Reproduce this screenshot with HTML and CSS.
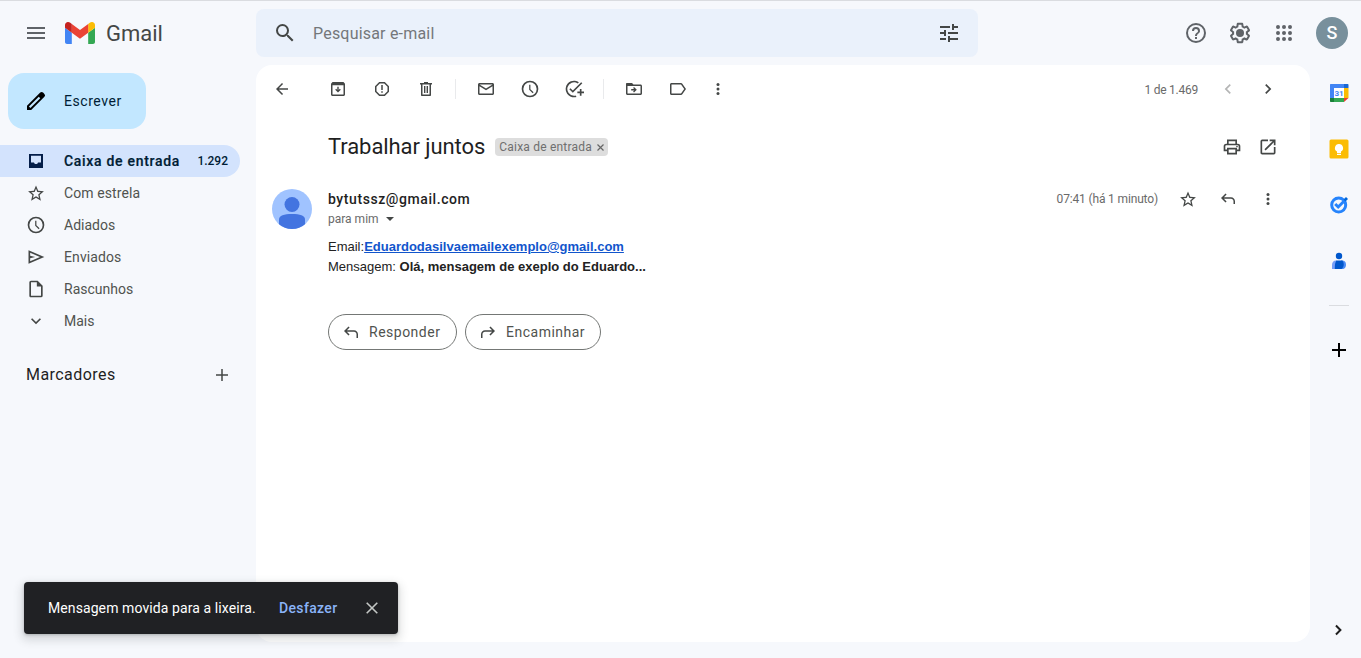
FILE: index.html
```html
<!DOCTYPE html>
<html lang="pt-BR">
<head>
<meta charset="utf-8">
<title>Gmail</title>
<link rel="stylesheet" href="styles.css">
</head>
<body>
<div class="app">
  <header class="header">
    <div class="brand">
      <svg class="menu" width="18" height="12" viewBox="0 0 18 12"><path d="M0 0h18v2H0zM0 5h18v2H0zM0 10h18v2H0z"/></svg>
      <svg class="logo" width="30" height="22" viewBox="52 42 88 66" preserveAspectRatio="none"><path fill="#4285f4" d="M58 108h14V74L52 59v43c0 3.320 2.690 6 6 6"/><path fill="#34a853" d="M120 108h14c3.320 0 6-2.690 6-6V59l-20 15"/><path fill="#fbbc04" d="M120 48v26l20-15v-8c0-7.420-8.470-11.650-14.400-7.200"/><path fill="#ea4335" d="M72 74V48l24 18 24-18v26L96 92"/><path fill="#c5221f" d="M52 51v8l20 15V48l-5.600-4.200c-5.940-4.450-14.400-.22-14.400 7.200"/></svg>
      <span class="brand-name">Gmail</span>
    </div>
    <div class="search">
      <svg class="icon24" viewBox="0 0 24 24"><path d="M15.500 14h-.79l-.28-.27A6.470 6.470 0 0 0 16 9.500 6.500 6.500 0 1 0 9.500 16c1.610 0 3.090-.59 4.230-1.570l.27.28v.79l5 4.990L20.490 19zm-6 0C7.010 14 5 11.990 5 9.500S7.010 5 9.500 5 14 7.010 14 9.500 11.990 14 9.500 14"/></svg>
      <span class="placeholder">Pesquisar e-mail</span>
      <svg class="icon24" viewBox="0 0 24 24"><path d="M3 17v2h6v-2zM3 5v2h10V5zm10 16v-2h8v-2h-8v-2h-2v6zM7 9v2H3v2h4v2h2V9zm14 4v-2H11v2zm-6-4h2V7h4V5h-4V3h-2z"/></svg>
    </div>
    <div class="account">
      <svg class="icon24" viewBox="0 0 24 24"><path d="M11 18h2v-2h-2zm1-16a10 10 0 1 0 0 20 10 10 0 0 0 0-20m0 18a8 8 0 1 1 0-16 8 8 0 0 1 0 16m0-14a4 4 0 0 0-4 4h2a2 2 0 1 1 4 0c0 2-3 1.750-3 5h2c0-2.250 3-2.500 3-5a4 4 0 0 0-4-4"/></svg>
      <svg class="icon24" viewBox="0 0 24 24"><path d="M13.850 22.250h-3.700c-.74 0-1.360-.54-1.450-1.270l-.27-1.890c-.27-.14-.53-.29-.79-.46l-1.800.72c-.7.26-1.470-.03-1.810-.65L2.200 15.530c-.35-.66-.2-1.440.36-1.880l1.530-1.190a6 6 0 0 1 0-.91l-1.520-1.190c-.59-.45-.74-1.260-.37-1.880l1.850-3.190c.34-.62 1.110-.9 1.790-.63l1.810.73c.26-.17.52-.32.78-.46l.27-1.910c.09-.7.710-1.250 1.440-1.250h3.700c.74 0 1.360.54 1.450 1.270l.27 1.890c.27.14.53.29.79.46l1.800-.72c.71-.26 1.480.03 1.820.65l1.840 3.180c.36.66.2 1.440-.36 1.880l-1.520 1.190a6 6 0 0 1 0 .91l1.520 1.190c.56.45.720 1.230.37 1.860l-1.860 3.220c-.34.62-1.110.9-1.800.63l-1.800-.72c-.26.17-.52.32-.78.46l-.27 1.910c-.1.680-.72 1.220-1.460 1.220m-3.230-2h2.760l.37-2.550.53-.22c.44-.18.88-.44 1.340-.78l.45-.34 2.380.96 1.380-2.400-2.030-1.580.07-.56c.06-.52.06-1.040 0-1.560l-.07-.56 2.030-1.580-1.390-2.400-2.390.96-.45-.35a6 6 0 0 0-1.320-.77l-.53-.22-.37-2.550h-2.760l-.37 2.550-.53.21c-.44.190-.88.440-1.340.79l-.45.33-2.380-.95-1.390 2.390 2.030 1.580-.07.56a7 7 0 0 0 0 1.570l.07.56-2.030 1.580 1.390 2.400 2.390-.96.45.35c.43.330.86.58 1.320.77l.53.22z"/><circle cx="12" cy="12" r="4"/></svg>
      <svg class="icon24" viewBox="0 0 24 24"><path d="M6 8a2 2 0 1 0 0-4 2 2 0 0 0 0 4m6 12a2 2 0 1 0 0-4 2 2 0 0 0 0 4m-6 0a2 2 0 1 0 0-4 2 2 0 0 0 0 4m0-6a2 2 0 1 0 0-4 2 2 0 0 0 0 4m6 0a2 2 0 1 0 0-4 2 2 0 0 0 0 4m4-8a2 2 0 1 0 4 0 2 2 0 0 0-4 0m-4 2a2 2 0 1 0 0-4 2 2 0 0 0 0 4m6 6a2 2 0 1 0 0-4 2 2 0 0 0 0 4m0 6a2 2 0 1 0 0-4 2 2 0 0 0 0 4"/></svg>
      <span class="avatar">S</span>
    </div>
  </header>

  <nav class="sidebar">
    <div class="compose">
      <svg class="icon24" viewBox="0 0 24 24"><path d="M20.410 4.940 19.060 3.590a2 2 0 0 0-2.830 0L3 16.820V21h4.180L20.410 7.770a2 2 0 0 0 0-2.830M6.410 19.060 4.940 17.590 14.780 7.740l1.480 1.480z"/></svg>
      <span>Escrever</span>
    </div>
    <div class="nav-item active">
      <svg class="icon20" viewBox="0 0 20 20"><path d="M3 3h14v14H3zm2 1.800v6.700h3c.3 1 1 1.600 2 1.600s1.700-.6 2-1.600h3V4.800z"/></svg>
      <span class="label">Caixa de entrada</span><span class="count">1.292</span>
    </div>
    <div class="nav-item">
      <svg class="icon20 star" viewBox="0 0 24 24"><path d="m22 9.240-7.190-.62L12 2 9.190 8.630 2 9.240l5.460 4.730L5.820 21 12 17.270 18.180 21l-1.630-7.030zM12 15.400l-3.760 2.270 1-4.280-3.320-2.880 4.380-.38L12 6.100l1.710 4.040 4.380.38-3.320 2.880 1 4.280z"/></svg>
      <span class="label">Com estrela</span>
    </div>
    <div class="nav-item">
      <svg class="icon20" viewBox="0 0 24 24"><path d="M12 2a10 10 0 1 0 0 20 10 10 0 0 0 0-20m0 18a8 8 0 1 1 0-16 8 8 0 0 1 0 16m.5-13H11v6l4.200 4 1.100-1.100-3.800-3.600z"/></svg>
      <span class="label tight">Adiados</span>
    </div>
    <div class="nav-item">
      <svg class="icon20" viewBox="0 0 24 24"><path d="M3 4v16l19-8zm2 3 11.850 5L5 17v-3.500l6-1.500-6-1.500z"/></svg>
      <span class="label">Enviados</span>
    </div>
    <div class="nav-item">
      <svg class="icon20" viewBox="0 0 24 24"><path d="M14 2H6a2 2 0 0 0-2 2v16c0 1.100.9 2 2 2h12a2 2 0 0 0 2-2V8zM6 20V4h7v5h5v11z"/></svg>
      <span class="label tight">Rascunhos</span>
    </div>
    <div class="nav-item">
      <svg class="icon20" viewBox="0 0 24 24"><path d="M7.410 8.590 12 13.170l4.590-4.580L18 10l-6 6-6-6z"/></svg>
      <span class="label tight">Mais</span>
    </div>
    <div class="labels-head">
      <span>Marcadores</span>
      <svg class="icon20" viewBox="0 0 20 20"><path d="M9.250 4h1.500v5.250H16v1.500h-5.250V16h-1.500v-5.250H4v-1.500h5.250z"/></svg>
    </div>
  </nav>

  <main class="message">
    <div class="toolbar">
      <span class="tool back"><svg class="icon20" viewBox="0 0 20 20"><path d="M16 9.250H6.870l4.190-4.190L10 4l-6 6 6 6 1.060-1.060-4.190-4.190H16z"/></svg></span>
      <span class="tool"><svg class="icon20" viewBox="0 0 20 20"><path d="M4.500 3h11L17 4.800v10.700c0 .8-.7 1.500-1.500 1.500h-11c-.8 0-1.500-.7-1.500-1.500V4.800zm0 3.300v9.200h11V6.300zM9.300 7.800h1.400v3.100l1.100-1.100 1 1-2.800 2.800-2.800-2.800 1-1 1.100 1.100z"/></svg></span>
      <span class="tool"><svg class="icon20" viewBox="0 0 20 20"><path fill-rule="evenodd" d="M7.200 3h5.600L17 7.200v5.600L12.800 17H7.200L3 12.800V7.200zm.6 1.500L4.500 7.800v4.400l3.300 3.300h4.400l3.300-3.300V7.800l-3.300-3.300zM9.250 6h1.500v5h-1.500zm0 6.300h1.500v1.500h-1.500z"/></svg></span>
      <span class="tool"><svg class="icon20" viewBox="0 0 20 20"><path fill-rule="evenodd" d="M8 3h4v1h4v1.500h-1V16c0 .6-.4 1-1 1H6c-.6 0-1-.4-1-1V5.500H4V4h4zM6.500 5.500v10h7v-10zM8 7h1.400v7H8zm2.600 0H12v7h-1.400z"/></svg></span>
      <i class="divider"></i>
      <span class="tool"><svg class="icon20" viewBox="0 0 20 20"><path fill-rule="evenodd" d="M3.500 4h13c.8 0 1.500.7 1.500 1.500v9c0 .8-.7 1.500-1.500 1.500h-13c-.8 0-1.500-.7-1.500-1.500v-9C2 4.700 2.700 4 3.500 4m0 3.200v7.300h13V7.200L10 11.300zm0-1.700L10 9.600l6.500-4.100z"/></svg></span>
      <span class="tool"><svg class="icon20" viewBox="0 0 24 24"><path d="M12 2a10 10 0 1 0 0 20 10 10 0 0 0 0-20m0 18a8 8 0 1 1 0-16 8 8 0 0 1 0 16m.5-13H11v6l4.200 4 1.100-1.100-3.800-3.600z"/></svg></span>
      <span class="tool"><svg class="icon20" viewBox="0 0 24 24"><path d="M22 5.180 10.590 16.600l-4.240-4.240 1.410-1.410 2.830 2.830 10-10zM12 20a8 8 0 1 1 4.430-14.660l1.450-1.450A10 10 0 1 0 15 21.540l-1-1.800c-.64.170-1.310.26-2 .26m7-5h-3v2h3v3h2v-3h3v-2h-3v-3h-2z"/></svg></span>
      <i class="divider"></i>
      <span class="tool"><svg class="icon20" viewBox="0 0 20 20"><path fill-rule="evenodd" d="M3 4h5l1.500 1.500h7c.8 0 1.500.7 1.500 1.500v7.500c0 .8-.7 1.500-1.500 1.500h-13c-.8 0-1.500-.7-1.500-1.500V5c0-.6.4-1 1-1m.5 3v7.500h13V7zM10 8l2.800 2.800-2.800 2.800-.9-1 1-1.100H7.200v-1.400h2.900l-1-1.100z"/></svg></span>
      <span class="tool"><svg class="icon20" viewBox="0 0 20 20"><path fill-rule="evenodd" d="M3.500 4H13c.6 0 1 .2 1.300.7L18 10l-3.700 5.300c-.3.500-.7.700-1.300.7H3.500c-.8 0-1.500-.7-1.500-1.500v-9C2 4.700 2.700 4 3.500 4m0 1.500v9H13l3.200-4.500L13 5.500z"/></svg></span>
      <span class="tool narrow"><svg class="icon20" viewBox="0 0 20 20"><circle cx="10" cy="5.500" r="1.500"/><circle cx="10" cy="10" r="1.500"/><circle cx="10" cy="14.500" r="1.500"/></svg></span>
      <span class="pager">1 de 1.469</span>
      <svg class="icon20 disabled" viewBox="0 0 24 24"><path d="M15.410 7.410 14 6l-6 6 6 6 1.410-1.410L10.830 12z"/></svg>
      <svg class="icon20 next" viewBox="0 0 24 24"><path d="M8.590 16.590 13.170 12 8.590 7.410 10 6l6 6-6 6z"/></svg>
    </div>
    <div class="subject-row">
      <h2 class="subject">Trabalhar juntos</h2>
      <span class="chip">Caixa de entrada<svg width="7" height="7" viewBox="0 0 7 7"><path d="m.5.500 6 6m0-6-6 6"/></svg></span>
      <svg class="icon20 print" viewBox="0 0 24 24"><path d="M19 8h-1V3H6v5H5a3 3 0 0 0-3 3v6h4v4h12v-4h4v-6a3 3 0 0 0-3-3M8 5h8v3H8zm8 14H8v-4h8zm2-4v-2H6v2H4v-4c0-.55.45-1 1-1h14c.55 0 1 .45 1 1v4z"/><circle cx="18" cy="11.500" r="1"/></svg>
      <svg class="icon20" viewBox="0 0 24 24"><path d="M19 19H5V5h7V3H5a2 2 0 0 0-2 2v14c0 1.100.9 2 2 2h14a2 2 0 0 0 2-2v-7h-2zM14 3v2h3.590l-9.830 9.830 1.410 1.410L19 6.410V10h2V3z"/></svg>
    </div>
    <div class="mail">
      <svg class="sender-avatar" width="40" height="40" viewBox="0 0 40 40"><circle cx="20" cy="20" r="20" fill="#a0c3ff"/><circle cx="20" cy="15.500" r="7.500" fill="#4374e0"/><path fill="#4374e0" d="M7 30.500c0-4 5-5.500 13-5.500s13 1.500 13 5.500v4.700a20 20 0 0 1-26 0z"/></svg>
      <div class="mail-main">
        <div class="sender-row">
          <span class="sender">bytutssz@gmail.com</span>
          <span class="time">07:41 (há 1 minuto)</span>
          <svg class="icon20 star" viewBox="0 0 24 24"><path d="m22 9.240-7.190-.62L12 2 9.190 8.630 2 9.240l5.460 4.730L5.820 21 12 17.270 18.180 21l-1.630-7.030zM12 15.400l-3.760 2.270 1-4.280-3.320-2.880 4.380-.38L12 6.100l1.710 4.040 4.380.38-3.320 2.880 1 4.280z"/></svg>
          <svg class="icon20" viewBox="0 0 20 20"><path d="M5.900 9.750 8.600 12.400l-1.100 1.100L3 9l4.500-4.500 1.100 1.100-2.700 2.650H13c2.200 0 4 1.800 4 4V15h-1.500v-2.750c0-1.400-1.100-2.500-2.500-2.500z"/></svg>
          <svg class="icon20" viewBox="0 0 20 20"><circle cx="10" cy="5.500" r="1.500"/><circle cx="10" cy="10" r="1.500"/><circle cx="10" cy="14.500" r="1.500"/></svg>
        </div>
        <div class="recipient">para mim<svg width="8" height="4" viewBox="0 0 8 4"><path d="M0 0h8L4 4z"/></svg></div>
        <div class="body">Email:<a class="mail-link">Eduardodasilvaemailexemplo@gmail.com</a><br>Mensagem: <b>Olá, mensagem de exeplo do Eduardo...</b></div>
        <div class="actions">
          <span class="pill reply"><svg class="icon20" viewBox="0 0 20 20"><path d="M5.900 9.750 8.600 12.400l-1.100 1.100L3 9l4.500-4.500 1.100 1.100-2.700 2.650H13c2.200 0 4 1.800 4 4V16h-1.500v-3.750c0-1.400-1.100-2.500-2.500-2.500z"/></svg>Responder</span>
          <span class="pill forward"><svg class="icon20" viewBox="0 0 20 20"><path d="M14.100 9.750 11.400 12.400l1.100 1.100L17 9l-4.500-4.500-1.100 1.100 2.700 2.650H7c-2.200 0-4 1.800-4 4V16h1.500v-3.750c0-1.400 1.100-2.500 2.500-2.500z"/></svg>Encaminhar</span>
        </div>
      </div>
    </div>
  </main>

  <aside class="rail">
    <svg width="20" height="20" viewBox="0 0 20 20"><path fill="#4285f4" d="M1.500 1H15v4H5v10H1V1.500z"/><path fill="#1967d2" d="M15 1h3.500c.5 0 1 .3 1 1v3H15z"/><path fill="#fbbc04" d="M15 5h4.500v10H15z"/><path fill="#34a853" d="M5 15h10v4H5z"/><path fill="#188038" d="M1 15h4v4H2c-.6 0-1-.4-1-1z"/><path fill="#ea4335" d="M15 15h4.500L15 19z"/><path fill="#fff" d="M5 5h10v10H5z"/><text x="10" y="12.800" class="cal">31</text></svg>
    <svg width="20" height="20" viewBox="0 0 20 20"><rect x=".5" y=".5" width="19" height="19" rx="1.500" fill="#fbbc04"/><path fill="#fff" d="M10 5a4 4 0 0 0-2 7.500V14h4v-1.500A4 4 0 0 0 10 5M8 14.800h4V16H8z"/></svg>
    <svg width="20" height="20" viewBox="0 0 20 20"><circle cx="9.700" cy="10" r="7" fill="none" stroke="#2684fc" stroke-width="3"/><path fill="none" stroke="#2684fc" stroke-width="3" d="m6.200 9 3 3 7-7"/><path fill="#0066da" d="m14.500 4.500 2.500-2.500 2 2-2.500 2.500z"/></svg>
    <svg width="20" height="20" viewBox="0 0 20 20"><circle cx="10" cy="5" r="3.200" fill="#0057cc"/><path fill="#759ef8" d="M7 9.500C4.500 9.500 3 11.500 3 14v4h5V9.500z"/><path fill="#4c8df6" d="M12 9.500h1c2.500 0 4 1.500 4 4s-1 4.500-4 4.500h-1z"/><path fill="#0057cc" d="M7.500 9.500h6c2 3 1.500 6.500-1 8.500H5.800c0-4 .2-6.500 1.700-8.500"/></svg>
    <i class="rail-line"></i>
    <svg class="rail-plus" width="20" height="20" viewBox="0 0 20 20"><path d="M9 3h2v6h6v2h-6v6H9v-6H3V9h6z"/></svg>
    <svg class="rail-toggle" width="20" height="20" viewBox="0 0 24 24"><path d="M7.500 16.500 12 12 7.500 7.500l1.700-1.700 6.200 6.200-6.200 6.200z"/></svg>
  </aside>

  <div class="toast">
    <span class="toast-text">Mensagem movida para a lixeira.</span>
    <span class="undo">Desfazer</span>
    <svg width="12" height="12" viewBox="0 0 12 12"><path d="m.7.700 10.600 10.600m0-10.600L.7 11.300"/></svg>
  </div>
</div>
</body>
</html>
```

FILE: styles.css
```css
* { box-sizing: border-box; }
body { margin: 0; font-family: Roboto, "Liberation Sans", sans-serif; color: #1f1f1f; }
svg { display: block; flex: none; fill: #444746; }
.icon20 { width: 20px; height: 20px; }
.icon24 { width: 24px; height: 24px; }
.star { padding-top: 1px; }

.app {
  position: relative;
  display: grid;
  grid-template: 64px 1fr / 256px 1fr 51px;
  width: 1361px; height: 658px;
  padding-bottom: 16px;
  overflow: hidden;
  border-top: 1px solid #dadce0;
  background: #f6f8fc;
}

.header { grid-column: 1 / -1; display: flex; align-items: center; }
.brand { display: flex; align-items: center; width: 256px; padding-left: 27px; }
.menu { fill: #5f6368; }
.logo { margin-left: 20px; }
.brand-name { margin-left: 11px; padding-top: 2px; font-size: 22px; line-height: 24px; color: #444746; }
.search {
  display: flex; align-items: center;
  width: 722px; height: 48px;
  padding: 0 17px;
  border-radius: 8px;
  background: #eaf1fb;
}
.placeholder { flex: 1; margin-left: 16px; font-size: 16px; letter-spacing: .2px; color: #74777a; }
.account { display: flex; align-items: center; gap: 20px; margin-left: auto; padding-right: 13px; }
.account svg { fill: #5f6368; }
.avatar {
  width: 32px; height: 32px;
  border-radius: 50%;
  background: #78909c;
  color: #fff;
  font-size: 18px; font-weight: 500; line-height: 32px; text-align: center;
}

.sidebar { padding-top: 8px; }
.compose {
  display: flex; align-items: center; gap: 16px;
  width: 138px; height: 56px;
  margin: 0 0 16px 8px; padding-left: 16px;
  border-radius: 16px;
  background: #c2e7ff;
  font-size: 14px; letter-spacing: .55px; color: #001d35;
}
.compose svg { fill: #000; }
.nav-item {
  display: flex; align-items: center;
  width: 240px; height: 32px;
  padding: 0 12px 0 26px;
  font-size: 14px; color: #50534f;
}
.label { flex: 1; margin-left: 18px; letter-spacing: .1px; }
.tight { letter-spacing: 0; }
.active { border-radius: 0 16px 16px 0; background: #d3e3fd; color: #001d35; font-weight: 700; }
.active svg { fill: #041e49; }
.active .label { letter-spacing: .7px; font-weight: 500; -webkit-text-stroke: .2px; }
.count { font-size: 12px; font-weight: 500; }
.labels-head {
  display: flex; align-items: center; justify-content: space-between;
  width: 232px; margin-top: 28px; padding-left: 26px;
  font-size: 16px; letter-spacing: .45px; line-height: 20px;
}

.message { border-radius: 16px; background: #fff; }
.toolbar { display: flex; align-items: center; height: 48px; padding-right: 32px; }
.tool { display: flex; justify-content: center; width: 44px; }
.back { margin: 0 12px 0 4px; }
.narrow { width: 36px; }
.divider { width: 1px; height: 20px; margin: 0 8px 0 7px; background: #e9eaec; }
.pager { margin-left: auto; padding-top: 1px; font-size: 12px; color: #6a6a6a; letter-spacing: -.25px; }
.disabled { margin-left: 20px; fill: #b4b5b5; }
.next { margin-left: 20px; }
.subject-row { display: flex; align-items: center; height: 68px; padding: 0 32px 0 72px; }
.subject { margin: 0; font-size: 22px; font-weight: 400; line-height: 28px; letter-spacing: -.07px; }
.chip {
  display: flex; align-items: center; gap: 5px;
  height: 18px; margin-left: 10px; padding: 0 4px;
  border-radius: 4px;
  background: #ddd;
  font-size: 12px; letter-spacing: .2px; color: #6f6f6f;
}
.chip svg { fill: none; stroke: #666; stroke-width: 1.2; }
.print { margin: 0 16px 0 auto; }
.mail { display: flex; padding: 8px 32px 0 16px; }
.sender-avatar { margin-right: 16px; }
.mail-main { flex: 1; }
.sender-row { display: flex; align-items: center; gap: 20px; height: 20px; }
.sender { flex: 1; font-size: 14px; font-weight: 500; letter-spacing: .58px; }
.time { font-size: 12px; letter-spacing: -.15px; color: #6a6a6a; }
.recipient { display: flex; align-items: center; gap: 7px; height: 20px; font-size: 12px; letter-spacing: 0; color: #6a6a6a; }
.body { margin-top: 8px; font: 13px/20px "Liberation Sans", Arial, sans-serif; color: #222; }
.mail-link { color: #15c; font-weight: 700; text-decoration: underline; }
.actions { display: flex; gap: 8px; margin-top: 37px; }
.pill {
  display: flex; align-items: center; gap: 8px;
  height: 36px; padding-left: 12px;
  border: 1px solid #747775; border-radius: 18px;
  font-size: 14px; letter-spacing: .5px; color: #50534f;
}
.reply { width: 129px; }
.forward { width: 136px; }

.rail { display: flex; flex-direction: column; align-items: center; gap: 36px; padding: 18px 0 2px 7px; }
.cal { fill: #4285f4; font-size: 8px; font-weight: 700; text-anchor: middle; }
.rail-line { width: 20px; height: 1px; margin-top: -2px; background: #dadce0; }
.rail-plus { margin-top: -2px; fill: #000; }
.rail-toggle { margin-top: auto; fill: #1f1f1f; }

.toast {
  position: absolute; left: 24px; top: 581px;
  display: flex; align-items: center;
  width: 374px; height: 52px;
  padding: 0 20px 0 24px;
  border-radius: 4px;
  background: #202124;
  box-shadow: 0 1px 3px rgba(60,64,67,.3), 0 4px 8px 3px rgba(60,64,67,.15);
  font-size: 14px; color: #fff;
}
.toast-text { width: 231px; letter-spacing: .09px; white-space: nowrap; }
.undo { flex: 1; color: #8ab4f8; letter-spacing: .35px; font-weight: 500; }
.toast svg { fill: none; stroke: #c4c7c5; stroke-width: 1.6; }
```
